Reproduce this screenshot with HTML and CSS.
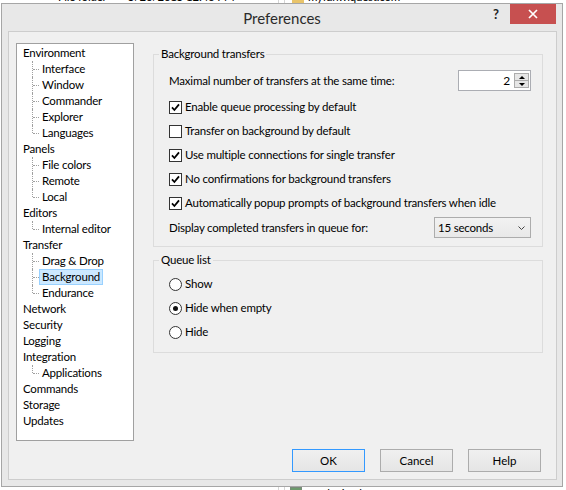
FILE: index.html
```html
<!DOCTYPE html>
<html lang="en">
<head>
<meta charset="utf-8">
<title>Preferences</title>
<link rel="stylesheet" href="styles.css">
</head>
<body>
<div class="desktop">
  <!-- explorer file list behind the dialog -->
  <div class="behind">
    <span class="behind-split behind-split-a"></span>
    <span class="behind-split behind-split-b"></span>
    <span class="behind-text behind-type">File folder</span>
    <span class="behind-text behind-date">5/20/2015 12:46 PM</span>
    <span class="behind-folder"></span>
    <span class="behind-text behind-site">myfanwiquest.com</span>
    <span class="behind-file"></span>
    <span class="behind-text behind-login">wp-login.php</span>
  </div>

  <div class="window">
    <div class="titlebar">
      <span class="title">Preferences</span>
      <div class="caption-buttons">
        <span class="help-btn">?</span>
        <span class="close-btn">
          <svg width="10" height="10" viewBox="0 0 10 10"><path d="M1 1 L9 9 M9 1 L1 9" stroke="#fff" stroke-width="1.7" fill="none"/></svg>
        </span>
      </div>
    </div>

    <div class="client">
      <div class="main">
        <ul class="tree">
          <li><span class="node">Environment</span>
            <ul>
              <li><span class="node">Interface</span></li>
              <li><span class="node">Window</span></li>
              <li><span class="node">Commander</span></li>
              <li><span class="node">Explorer</span></li>
              <li><span class="node">Languages</span></li>
            </ul>
          </li>
          <li><span class="node">Panels</span>
            <ul>
              <li><span class="node">File colors</span></li>
              <li><span class="node">Remote</span></li>
              <li><span class="node">Local</span></li>
            </ul>
          </li>
          <li><span class="node">Editors</span>
            <ul>
              <li><span class="node">Internal editor</span></li>
            </ul>
          </li>
          <li><span class="node">Transfer</span>
            <ul>
              <li><span class="node">Drag &amp; Drop</span></li>
              <li><span class="node selected">Background</span></li>
              <li><span class="node">Endurance</span></li>
            </ul>
          </li>
          <li><span class="node">Network</span></li>
          <li><span class="node">Security</span></li>
          <li><span class="node">Logging</span></li>
          <li><span class="node">Integration</span>
            <ul>
              <li><span class="node">Applications</span></li>
            </ul>
          </li>
          <li><span class="node">Commands</span></li>
          <li><span class="node">Storage</span></li>
          <li><span class="node">Updates</span></li>
        </ul>

        <div class="pages">
          <fieldset class="group">
            <legend>Background transfers</legend>
            <div class="group-body">
              <div class="field-row spin-row">
                <span>Maximal number of transfers at the same time:</span>
                <div class="spin">
                  <span class="spin-value">2</span>
                  <span class="spin-buttons">
                    <span class="spin-btn spin-up"></span>
                    <span class="spin-btn spin-down"></span>
                  </span>
                </div>
              </div>
              <div class="check-row"><span class="box"><svg width="11" height="11" viewBox="0 0 11 11"><polyline points="2,5.4 4.4,8 9,2.4" fill="none" stroke="#000" stroke-width="1.8"/></svg></span>Enable queue processing by default</div>
              <div class="check-row"><span class="box"></span>Transfer on background by default</div>
              <div class="check-row"><span class="box"><svg width="11" height="11" viewBox="0 0 11 11"><polyline points="2,5.4 4.4,8 9,2.4" fill="none" stroke="#000" stroke-width="1.8"/></svg></span>Use multiple connections for single transfer</div>
              <div class="check-row"><span class="box"><svg width="11" height="11" viewBox="0 0 11 11"><polyline points="2,5.4 4.4,8 9,2.4" fill="none" stroke="#000" stroke-width="1.8"/></svg></span>No confirmations for background transfers</div>
              <div class="check-row"><span class="box"><svg width="11" height="11" viewBox="0 0 11 11"><polyline points="2,5.4 4.4,8 9,2.4" fill="none" stroke="#000" stroke-width="1.8"/></svg></span>Automatically popup prompts of background transfers when idle</div>
              <div class="field-row combo-row">
                <span>Display completed transfers in queue for:</span>
                <div class="combo">
                  <span>15 seconds</span>
                  <svg width="7" height="4" viewBox="0 0 7 4"><polyline points="0.5,0.5 3.5,3.5 6.5,0.5" fill="none" stroke="#444" stroke-width="1"/></svg>
                </div>
              </div>
            </div>
          </fieldset>

          <fieldset class="group">
            <legend>Queue list</legend>
            <div class="group-body queue-body">
              <div class="check-row"><span class="radio"></span>Show</div>
              <div class="check-row"><span class="radio checked"></span>Hide when empty</div>
              <div class="check-row"><span class="radio"></span>Hide</div>
            </div>
          </fieldset>
        </div>
      </div>

      <div class="buttons">
        <button class="btn btn-default">OK</button>
        <button class="btn">Cancel</button>
        <button class="btn">Help</button>
      </div>
    </div>
  </div>
</div>
</body>
</html>
```

FILE: styles.css
```css
* {
  box-sizing: border-box;
}

html,
body {
  margin: 0;
  padding: 0;
}

body {
  width: 566px;
  height: 490px;
  overflow: hidden;
  background: #fff;
  color: #000;
  font-family: Lato, "Noto Sans", sans-serif;
  font-size: 11.5px;
  letter-spacing: -0.2px;
  line-height: 16px;
}

.desktop {
  position: relative;
  width: 566px;
  height: 490px;
  overflow: hidden;
}

/* ---- explorer window peeking out around the dialog ---- */
.behind-text {
  position: absolute;
  white-space: nowrap;
}

.behind-type { left: 58px; top: -11px; }
.behind-date { left: 128px; top: -11px; }
.behind-site { left: 308px; top: -11px; }
.behind-login { left: 308px; top: 486px; }

.behind-split {
  position: absolute;
  top: 0;
  width: 1px;
  height: 490px;
  background: #d5d5d5;
}

.behind-split-a { left: 278px; }
.behind-split-b { left: 284px; }

.behind-folder {
  position: absolute;
  left: 292px;
  top: -6px;
  width: 12px;
  height: 9px;
  background: #e9c46a;
}

.behind-file {
  position: absolute;
  left: 290px;
  top: 487px;
  width: 12px;
  height: 6px;
  border: 1px solid #7a8a7a;
  background: #6c9b6c;
}

/* ---- dialog window ---- */
.window {
  position: absolute;
  left: 1px;
  top: 3px;
  width: 562px;
  height: 484px;
  border: 1px solid #a6a6a6;
  background: #e8e8e8;
  display: flex;
  flex-direction: column;
}

.titlebar {
  flex: none;
  height: 27px;
  display: grid;
  grid-template-columns: 1fr auto 1fr;
  align-items: start;
}

.title {
  grid-column: 2;
  font-size: 15px;
  letter-spacing: 0;
  line-height: 28px;
  color: #2b2b2b;
}

.caption-buttons {
  grid-column: 3;
  justify-self: end;
  display: flex;
  align-items: flex-start;
}

.help-btn {
  font-weight: bold;
  font-size: 13px;
  letter-spacing: 0;
  line-height: 20px;
  color: #222;
  margin-right: 11px;
}

.close-btn {
  width: 46px;
  height: 20px;
  background: #c75050;
  display: flex;
  align-items: center;
  justify-content: center;
  margin-right: 6px;
}

.client {
  flex: 1;
  margin: 0 5px 6px 6px;
  background: #f0f0f0;
  border: 1px solid #cdcdcd;
  padding: 11px 14px 0 7px;
  display: flex;
  flex-direction: column;
}

.main {
  display: flex;
  gap: 19px;
}

/* ---- navigation tree ---- */
.tree {
  flex: none;
  width: 118px;
  height: 398px;
  margin: 0;
  padding: 1px 0 0;
  list-style: none;
  background: #fff;
  border: 1px solid #a0a0a0;
}

.tree ul {
  list-style: none;
  margin: 0;
  padding: 0;
}

.node {
  display: block;
  width: fit-content;
  height: 16px;
  line-height: 14px;
  padding: 0 2px;
  margin-left: 3px;
  border: 1px solid transparent;
  white-space: nowrap;
}

.tree ul .node {
  margin-left: 22px;
}

.tree ul li {
  position: relative;
}

.tree ul li::before {
  content: "";
  position: absolute;
  left: 15px;
  top: 0;
  bottom: 0;
  border-left: 1px dotted #a0a0a0;
}

.tree ul li:last-child::before {
  bottom: auto;
  height: 8px;
}

.tree ul li::after {
  content: "";
  position: absolute;
  left: 16px;
  top: 8px;
  width: 6px;
  border-top: 1px dotted #a0a0a0;
}

.node.selected {
  background: #cce8ff;
  border-color: #99d1ff;
}

/* ---- option pages ---- */
.pages {
  flex: 1;
  min-width: 0;
  margin-top: 3px;
  margin-right: -1px;
}

.group {
  margin: 0;
  padding: 0;
  min-width: 0;
  border: 1px solid #dcdcdc;
}

.group + .group {
  margin-top: 5px;
}

.group legend {
  margin-left: 5px;
  padding: 0 2px;
  line-height: 16px;
}

.group-body {
  display: flex;
  flex-direction: column;
  padding: 8px 11px 8px 15px;
}

.queue-body {
  padding-top: 4px;
}

.field-row {
  height: 21px;
  display: flex;
  align-items: center;
  justify-content: space-between;
}

.spin-row {
  margin-bottom: 4px;
}

.combo-row {
  margin-top: 2px;
}

.check-row {
  height: 24px;
  display: flex;
  align-items: center;
  white-space: nowrap;
}

.box {
  flex: none;
  width: 13px;
  height: 13px;
  margin-right: 3px;
  border: 1px solid #333;
  background: #fff;
  display: flex;
  align-items: center;
  justify-content: center;
}

.radio {
  flex: none;
  width: 13px;
  height: 13px;
  margin-right: 3px;
  border: 1px solid #333;
  border-radius: 50%;
  background: #fff;
  display: flex;
  align-items: center;
  justify-content: center;
}

.radio.checked::after {
  content: "";
  width: 5px;
  height: 5px;
  border-radius: 50%;
  background: #111;
}

.spin {
  width: 73px;
  height: 21px;
  border: 1px solid #abadb3;
  background: #fff;
  display: flex;
  align-items: center;
  padding: 0 1px 0 4px;
}

.spin-value {
  flex: 1;
  text-align: right;
  padding-right: 4px;
  font-size: 12px;
}

.spin-buttons {
  width: 15px;
  display: flex;
  flex-direction: column;
}

.spin-btn {
  height: 8px;
  border: 1px solid #acacac;
  background: #e6e6e6;
  display: flex;
  align-items: center;
  justify-content: center;
}

.spin-down {
  margin-top: -1px;
}

.spin-up::after,
.spin-down::after {
  content: "";
  border-left: 3px solid transparent;
  border-right: 3px solid transparent;
}

.spin-up::after {
  border-bottom: 3px solid #000;
}

.spin-down::after {
  border-top: 3px solid #000;
}

.combo {
  width: 97px;
  height: 21px;
  border: 1px solid #acacac;
  background: linear-gradient(#f2f2f2, #e8e8e8);
  display: flex;
  align-items: center;
  justify-content: space-between;
  padding: 0 5px 0 3px;
}

/* ---- dialog buttons ---- */
.buttons {
  margin-top: 8px;
  margin-right: 1px;
  display: flex;
  justify-content: flex-end;
  gap: 15px;
}

.btn {
  width: 73px;
  height: 23px;
  padding: 0;
  border: 1px solid #acacac;
  background: linear-gradient(#f0f0f0, #e5e5e5);
  color: #000;
  font: inherit;
}

.btn-default {
  border-color: #3399ff;
}
```
